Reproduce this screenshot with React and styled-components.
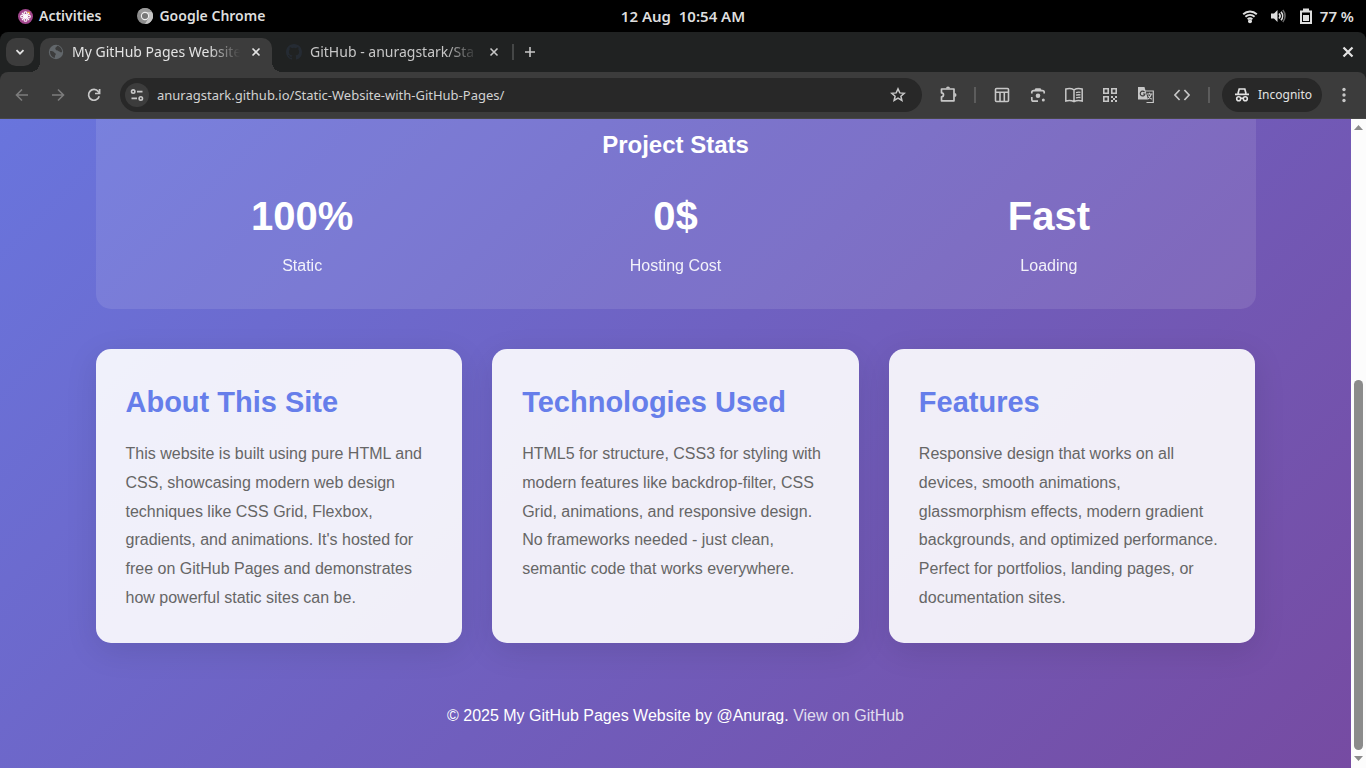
import React from "react";
import styled, { createGlobalStyle } from "styled-components";

const GlobalStyle = createGlobalStyle`
  *, *::before, *::after { box-sizing: border-box; }
  html, body { margin: 0; padding: 0; background: #000; }
  body { font-family: "Liberation Sans", Arial, sans-serif; overflow: hidden; }
  h2, h3, p { margin: 0; }
  button { border: 0; margin: 0; padding: 0; background: none; color: inherit; font: inherit; cursor: pointer; }
  svg { display: block; flex: none; }
`;

const Desktop = styled.div`
  display: flex;
  flex-direction: column;
  height: 100vh;
  background: #000;
`;

/* ---------- system bar ---------- */

const SystemBar = styled.header`
  display: grid;
  grid-template-columns: 1fr auto 1fr;
  align-items: center;
  flex: none;
  height: 32px;
  padding: 0 12px;
  color: #dedede;
  font: 600 14px/20px "Noto Sans", sans-serif;
`;

const SystemGroup = styled.div`
  display: flex;
  align-items: center;
  gap: ${(p) => p.$gap}px;
  padding-left: 6px;
  justify-content: ${(p) => (p.$end ? "flex-end" : "flex-start")};
`;

const SystemButton = styled.button`
  display: flex;
  align-items: center;
  gap: 6px;
  white-space: pre;
  font-size: ${(p) => (p.$large ? 15 : 14)}px;
`;

/* ---------- browser window ---------- */

const Window = styled.div`
  display: flex;
  flex-direction: column;
  flex: 1;
  min-height: 0;
  overflow: hidden;
  border-radius: 8px 8px 0 0;
  background: #202222;
  font-family: "Noto Sans", sans-serif;
`;

const TabStrip = styled.div`
  display: flex;
  align-items: center;
  flex: none;
  height: 40px;
  padding: 0 10px 0 6px;
  color: #e3e3e3;
`;

const TabSearch = styled.button`
  display: grid;
  place-items: center;
  width: 28px;
  height: 28px;
  margin-right: 6px;
  border-radius: 10px;
  background: #3c3c3c;
`;

const Tab = styled.div`
  position: relative;
  display: flex;
  align-items: center;
  align-self: flex-end;
  width: ${(p) => (p.$active ? 232 : 240)}px;
  height: 34px;
  padding: ${(p) => (p.$active ? "0 8px 6px" : "0 10px 6px 14px")};
  border-radius: 10px 10px 0 0;
  background: ${(p) => (p.$active ? "#3c3c3c" : "transparent")};
  color: ${(p) => (p.$active ? "#e3e3e3" : "#c7c7c7")};

  &::before, &::after {
    content: "";
    display: ${(p) => (p.$active ? "block" : "none")};
    position: absolute;
    bottom: 0;
    width: 10px;
    height: 10px;
  }
  &::before { left: -10px; background: radial-gradient(circle at 0 0, transparent 10px, #3c3c3c 10px); }
  &::after { right: -10px; background: radial-gradient(circle at 100% 0, transparent 10px, #3c3c3c 10px); }
`;

const TabTitle = styled.button`
  flex: 1;
  min-width: 0;
  margin: 0 8px;
  overflow: hidden;
  text-align: left;
  white-space: nowrap;
  font-size: 14px;
  line-height: 20px;
  mask-image: linear-gradient(to right, #000 calc(100% - 32px), transparent);
`;

const SmallButton = styled.button`
  display: grid;
  place-items: center;
  flex: none;
  width: 16px;
  height: 16px;
`;

const StripDivider = styled.span`
  width: 2px;
  height: 16px;
  margin-right: 8px;
  background: #454747;
`;

const Spacer = styled.div`
  flex: 1;
`;

const Toolbar = styled.div`
  display: flex;
  align-items: center;
  flex: none;
  height: 47px;
  padding: 0 12px;
  border-bottom: 1px solid #474747;
  border-radius: 8px 8px 0 0;
  background: #3c3c3c;
  color: #c7c7c7;
`;

const NavButtons = styled.nav`
  display: flex;
  gap: 16px;
  margin-right: 16px;
`;

const ToolButton = styled.button`
  display: grid;
  place-items: center;
  width: 20px;
  height: 20px;
  color: ${(p) => (p.$dim ? "#7c7c7c" : "#c7c7c7")};
`;

const AddressBar = styled.form`
  display: flex;
  align-items: center;
  flex: 1;
  height: 34px;
  margin: 0 16px 0 0;
  padding: 0 16px 0 5px;
  border-radius: 17px;
  background: #282828;
`;

const SiteInfo = styled.button`
  display: grid;
  place-items: center;
  width: 24px;
  height: 24px;
  border-radius: 50%;
  background: #3c3c3c;
`;

const AddressInput = styled.input`
  flex: 1;
  min-width: 0;
  margin: 0 8px;
  padding: 0;
  border: 0;
  outline: 0;
  background: none;
  color: #d2d2d2;
  font: 400 13px/20px "Noto Sans", sans-serif;
`;

const Extensions = styled.div`
  display: flex;
  gap: 16px;
`;

const ToolDivider = styled.span`
  width: 2px;
  height: 16px;
  margin: 0 16px;
  background: #5c5c5c;
`;

const Incognito = styled.button`
  display: flex;
  align-items: center;
  gap: 8px;
  height: 34px;
  margin: 0 12px 0 -4px;
  padding: 0 10px 0 12px;
  border-radius: 17px;
  background: #282828;
  color: #e3e3e3;
  font-size: 12px;
  line-height: 18px;
`;

/* ---------- web page ---------- */

const Viewport = styled.div`
  display: flex;
  flex: 1;
  min-height: 0;
`;

const Page = styled.main`
  flex: 1;
  min-width: 0;
  overflow: hidden;
  background: linear-gradient(135deg, #667eea 0%, #764ba2 100%) bottom / 100% 1096px;
  font-family: "Liberation Sans", Arial, sans-serif;
`;

const Container = styled.div`
  max-width: 1200px;
  margin: 0 auto;
  padding: 0 20px;
`;

const Stats = styled.section`
  margin-bottom: 40px;
  padding: 7px 30px 30px;
  border-radius: 0 0 15px 15px;
  background: rgba(255, 255, 255, 0.1);
  color: #fff;
  text-align: center;
`;

const StatsTitle = styled.h3`
  margin-bottom: 20px;
  font-size: 24px;
  line-height: 38px;
`;

const StatsGrid = styled.div`
  display: grid;
  grid-template-columns: repeat(3, 1fr);
  gap: 20px;
`;

const StatValue = styled.div`
  margin-bottom: 5px;
  font-size: 40px;
  font-weight: 700;
  line-height: 64px;
`;

const StatLabel = styled.div`
  font-size: 16px;
  line-height: 26px;
  opacity: 0.9;
`;

const Cards = styled.section`
  display: grid;
  grid-template-columns: repeat(3, 1fr);
  gap: 30px;
`;

const Card = styled.article`
  padding: 30px;
  border-radius: 15px;
  background: rgba(255, 255, 255, 0.9);
  box-shadow: 0 8px 32px rgba(0, 0, 0, 0.1);
`;

const CardTitle = styled.h2`
  margin-bottom: 15px;
  color: #667eea;
  font-size: 29px;
  line-height: 46px;
`;

const CardText = styled.p`
  color: #666;
  font-size: 16px;
  line-height: 1.8;
`;

const Footer = styled.footer`
  padding: 60px 0 39px;
  color: #fff;
  font-size: 16px;
  line-height: 26px;
  text-align: center;
`;

const FooterLink = styled.a`
  color: rgba(255, 255, 255, 0.8);
  text-decoration: none;
`;

const Scrollbar = styled.div`
  display: flex;
  flex-direction: column;
  align-items: center;
  justify-content: space-between;
  flex: none;
  width: 15px;
  padding: 5px 0 6px;
  background: #fcfcfc;
`;

const ScrollTrack = styled.div`
  display: flex;
  flex-direction: column;
  justify-content: flex-end;
  flex: 1;
  padding: 4px 0 6px;
`;

const ScrollThumb = styled.div`
  width: 9px;
  height: 60%;
  border-radius: 5px;
  background: #8b8b8b;
`;

/* ---------- icons ---------- */

const Icon = ({ size = 16, box = 16, children }) => (
  <svg width={size} height={size} viewBox={`0 0 ${box} ${box}`} fill="none" stroke="currentColor" strokeWidth="1.6" aria-hidden="true">
    {children}
  </svg>
);

const ActivitiesIcon = () => (
  <Icon size={15}>
    <circle cx="8" cy="8" r="8" fill="#a3478e" stroke="none" />
    <path d="M9 2.8h3.6v3.6z" fill="#f0a22e" stroke="none" />
    <g stroke="#fff" strokeWidth="1.2">
      <circle cx="8" cy="8" r="1.3" />
      <circle cx="8" cy="4.4" r="1.5" /><circle cx="8" cy="11.6" r="1.5" />
      <circle cx="4.4" cy="8" r="1.5" /><circle cx="11.6" cy="8" r="1.5" />
      <path d="M4.2 4.2l7.6 7.6M11.8 4.2l-7.6 7.6" />
    </g>
  </Icon>
);

const ChromeIcon = () => (
  <Icon>
    <circle cx="8" cy="8" r="8" fill="#8c8c8c" stroke="none" />
    <path d="M8 4h7A8 8 0 0 1 8 16l3.5-6z" fill="#c4c4c4" stroke="none" />
    <path d="M1.1 4A8 8 0 0 1 15 4H8a4 4 0 0 0-3.5 2z" fill="#999" stroke="none" />
    <circle cx="8" cy="8" r="3.6" fill="#777" stroke="#eee" strokeWidth="1.1" />
  </Icon>
);

const WifiIcon = () => (
  <Icon>
    <path d="M1.2 6.2c3.900-3.700 9.700-3.700 13.600 0M3.400 8.800c2.700-2.400 6.500-2.400 9.200 0M5.600 11.200c1.500-1.100 3.300-1.100 4.800 0" strokeWidth="1.900" />
    <circle cx="8" cy="13.300" r="2" fill="currentColor" stroke="none" />
  </Icon>
);

const VolumeIcon = () => (
  <Icon>
    <path d="M1 5.500h3L7.500 2v12L4 10.500H1z" fill="currentColor" stroke="none" />
    <path d="M9 5.500c1.300 1.400 1.300 3.600 0 5M11 3.700c2.100 2.500 2.100 6.100 0 8.600" />
    <path d="M12.800 2c3 3.500 3 8.500 0 12" stroke="#666" />
  </Icon>
);

const BatteryIcon = () => (
  <Icon>
    <path d="M5 1.500h6M3 3.500h10v11.500H3z" strokeWidth="2" />
    <path d="M5 7h6v6H5z" fill="currentColor" stroke="none" />
  </Icon>
);

const ChevronIcon = () => (
  <Icon size={12} box={12}><path d="M2.500 4.200 6 7.700l3.500-3.500" strokeWidth="1.800" /></Icon>
);

const GlobeIcon = () => (
  <Icon>
    <circle cx="8" cy="8" r="7.200" fill="#62676b" stroke="none" />
    <path d="M2 7c2 0 3.200.2 4 1.200.6.900 1.600.8 1.800 1.900.1 1-.8 1.200-.8 2.300L6.600 14C3.600 13 1.800 10.400 2 7zM9 1.800c-.2 1.600-1.600 1.300-1.700 2.600 0 1 .8 1.300 1.500 2 .7.800 2 .3 2.700 1 .6.700 1.500.8 2.600.8.200-3-1.900-5.900-5.100-6.400z" fill="#3c3c3c" stroke="none" />
  </Icon>
);

const GitHubIcon = () => (
  <Icon>
    <path
      fill="#252b33"
      stroke="none"
      d="M8 0C3.580 0 0 3.580 0 8c0 3.540 2.290 6.530 5.470 7.590.4.070.55-.17.55-.38 0-.19-.01-.82-.01-1.490-2.010.37-2.530-.49-2.690-.94-.09-.23-.48-.94-.82-1.130-.28-.15-.68-.52-.01-.53.63-.01 1.080.58 1.230.82.72 1.210 1.870.87 2.330.66.07-.52.28-.87.51-1.070-1.780-.2-3.640-.89-3.640-3.950 0-.87.31-1.590.82-2.150-.08-.2-.36-1.020.08-2.120 0 0 .67-.21 2.200.82a7.600 7.600 0 0 1 4 0c1.530-1.040 2.200-.82 2.200-.82.44 1.100.16 1.920.08 2.120.51.56.82 1.270.82 2.150 0 3.070-1.870 3.750-3.650 3.950.29.25.54.73.54 1.480 0 1.070-.01 1.930-.01 2.200 0 .21.15.46.55.38A8 8 0 0 0 16 8c0-4.420-3.580-8-8-8z"
    />
  </Icon>
);

const CloseIcon = ({ bold }) => (
  <Icon><path d={bold ? "M3.500 3.500l9 9M12.500 3.500l-9 9" : "M4.500 4.500l7 7M11.500 4.500l-7 7"} strokeWidth={bold ? 2.200 : 1.600} /></Icon>
);

const PlusIcon = () => <Icon><path d="M8 3v10M3 8h10" stroke="#c7c7c7" strokeWidth="1.600" /></Icon>;

const BackIcon = () => <Icon><path d="M14 8H3M8 2.500 2.500 8 8 13.500" /></Icon>;
const ForwardIcon = () => <Icon><path d="M2 8h11M8 2.500 13.500 8 8 13.500" /></Icon>;
const ReloadIcon = () => (
  <Icon>
    <path d="M13.200 9.200A5.400 5.400 0 1 1 12.300 4.600L13.500 6" strokeWidth="1.700" />
    <path d="M13.600 2v4.500H9" strokeWidth="1.700" />
  </Icon>
);

const TuneIcon = () => (
  <Icon>
    <circle cx="4.200" cy="4.600" r="1.700" /><circle cx="11.800" cy="11.400" r="1.700" />
    <path d="M8 4.600h5.500M2.500 11.400H8" />
  </Icon>
);

const StarIcon = () => (
  <Icon><path d="M8 1.900l1.800 4 4.400.4-3.300 2.900 1 4.300L8 11.200l-3.900 2.300 1-4.300L1.800 6.300l4.400-.4z" strokeWidth="1.500" /></Icon>
);

const PuzzleIcon = () => (
  <Icon size={20} box={20}>
    <path d="M3.500 4h12.500v11.800h-12.500v-4a2 2 0 0 0 0-4z" strokeWidth="1.700" strokeLinejoin="round" />
    <path d="M8 3.500a2 2 0 0 1 4 0zM16.500 8a2 2 0 0 1 0 4z" fill="currentColor" stroke="none" />
  </Icon>
);

const LayoutIcon = () => (
  <Icon><rect x="1.500" y="1.500" width="13" height="13" rx="1" /><path d="M1.500 5.300h13M6 5.300v9M10.300 5.300v9" /></Icon>
);

const LensIcon = () => (
  <Icon>
    <path d="M1.800 6.500V5.300c0-1 .7-1.700 1.700-1.700h9c1 0 1.700.7 1.700 1.700v1.200M1.800 10v2.500c0 1 .7 1.700 1.700 1.700H8M5 3.500 6 2h4l1 1.500" strokeWidth="1.700" />
    <circle cx="8" cy="8.700" r="2.300" fill="currentColor" stroke="none" />
    <circle cx="13.300" cy="13" r="1.500" fill="currentColor" stroke="none" />
  </Icon>
);

const ReaderIcon = () => (
  <Icon size={20} box={20}>
    <path d="M10 4.800C7.500 3.200 4.500 3.200 1.800 4v12c2.700-.8 5.700-.8 8.200.7 2.500-1.500 5.500-1.500 8.200-.7V4c-2.700-.8-5.700-.8-8.200.8zM10 4.800v11.800" strokeWidth="1.500" />
    <path d="M12 7.600c1.500-.5 3-.6 4.500-.3M12 10.200c1.500-.5 3-.6 4.500-.3M12 12.800c1.500-.5 3-.6 4.500-.3" strokeWidth="1.300" />
  </Icon>
);

const QrIcon = () => (
  <Icon>
    <path d="M1.800 1.800h4.400v4.400H1.800zM9.800 1.800h4.400v4.400H9.800zM1.800 9.800h4.400v4.400H1.800z" />
    <path d="M9 9h2v2H9zM13 9h2v2h-2zM11 11h2v2h-2zM9 13h2v2H9zM13 13h2v2h-2z" fill="currentColor" stroke="none" />
  </Icon>
);

const TranslateIcon = () => (
  <Icon>
    <path d="M6.500 4H15.300v11.500H8.500" strokeWidth="1.200" />
    <path d="M0 0h6.500L10 12.500H0z" fill="currentColor" stroke="none" />
    <path d="M6.500 5A2.400 2.400 0 1 0 7 7H5" stroke="#3c3c3c" strokeWidth="1.200" />
    <path d="M9 7h5.500M11.500 5.700V7M13.300 7c-.6 2.300-1.700 3.800-3.300 5M10.300 8.500c.7 1.500 1.900 2.700 3.400 3.700" strokeWidth="1.100" />
  </Icon>
);

const CodeIcon = () => <Icon><path d="M5.600 3 .9 8l4.700 5M10.400 3l4.700 5-4.700 5" strokeWidth="1.700" /></Icon>;

const IncognitoIcon = () => (
  <Icon>
    <path d="M4 6.500 5.200 2h5.600L12 6.500M1 7.300h14" strokeWidth="1.700" />
    <circle cx="4.700" cy="11.700" r="2" /><circle cx="11.300" cy="11.700" r="2" />
    <path d="M6.800 11.300h2.400" />
  </Icon>
);

const MenuIcon = () => (
  <Icon>
    <g fill="currentColor" stroke="none"><circle cx="8" cy="2.500" r="1.700" /><circle cx="8" cy="8" r="1.700" /><circle cx="8" cy="13.500" r="1.700" /></g>
  </Icon>
);

const ScrollArrow = ({ down }) => (
  <svg width="9" height="6" viewBox="0 0 9 6" aria-hidden="true">
    <path d={down ? "M0 0h9L4.500 5z" : "M0 6h9L4.500 1z"} fill="#8b8b8b" />
  </svg>
);

/* ---------- data ---------- */

const stats = [
  { value: "100%", label: "Static" },
  { value: "0$", label: "Hosting Cost" },
  { value: "Fast", label: "Loading" },
];

const cards = [
  {
    title: "About This Site",
    text: "This website is built using pure HTML and CSS, showcasing modern web design techniques like CSS Grid, Flexbox, gradients, and animations. It's hosted for free on GitHub Pages and demonstrates how powerful static sites can be.",
  },
  {
    title: "Technologies Used",
    text: "HTML5 for structure, CSS3 for styling with modern features like backdrop-filter, CSS Grid, animations, and responsive design. No frameworks needed - just clean, semantic code that works everywhere.",
  },
  {
    title: "Features",
    text: "Responsive design that works on all devices, smooth animations, glassmorphism effects, modern gradient backgrounds, and optimized performance. Perfect for portfolios, landing pages, or documentation sites.",
  },
];

const extensions = [
  ["Page layout", LayoutIcon],
  ["Search with Lens", LensIcon],
  ["Reading mode", ReaderIcon],
  ["Create QR code", QrIcon],
  ["Translate", TranslateIcon],
  ["Developer tools", CodeIcon],
];

export default function App() {
  return (
    <Desktop>
      <GlobalStyle />
      <SystemBar>
        <SystemGroup $gap={36}>
          <SystemButton><ActivitiesIcon />Activities</SystemButton>
          <SystemButton><ChromeIcon />Google Chrome</SystemButton>
        </SystemGroup>
        <SystemButton $large>{"12 Aug  10:54 AM"}</SystemButton>
        <SystemGroup $gap={12} $end>
          <WifiIcon />
          <VolumeIcon />
          <SystemButton $large><BatteryIcon />77 %</SystemButton>
        </SystemGroup>
      </SystemBar>

      <Window>
        <TabStrip>
          <TabSearch aria-label="Search tabs"><ChevronIcon /></TabSearch>
          <Tab $active>
            <GlobeIcon />
            <TabTitle>My GitHub Pages Website</TabTitle>
            <SmallButton aria-label="Close tab"><CloseIcon /></SmallButton>
          </Tab>
          <Tab>
            <GitHubIcon />
            <TabTitle>GitHub - anuragstark/Sta</TabTitle>
            <SmallButton aria-label="Close tab"><CloseIcon /></SmallButton>
          </Tab>
          <StripDivider />
          <SmallButton aria-label="New tab"><PlusIcon /></SmallButton>
          <Spacer />
          <SmallButton aria-label="Close window"><CloseIcon bold /></SmallButton>
        </TabStrip>

        <Toolbar>
          <NavButtons aria-label="History">
            <ToolButton $dim aria-label="Back"><BackIcon /></ToolButton>
            <ToolButton $dim aria-label="Forward"><ForwardIcon /></ToolButton>
            <ToolButton aria-label="Reload"><ReloadIcon /></ToolButton>
          </NavButtons>
          <AddressBar onSubmit={(e) => e.preventDefault()}>
            <SiteInfo type="button" aria-label="View site information"><TuneIcon /></SiteInfo>
            <AddressInput aria-label="Address" defaultValue="anuragstark.github.io/Static-Website-with-GitHub-Pages/" spellCheck={false} />
            <SmallButton type="button" aria-label="Bookmark this page"><StarIcon /></SmallButton>
          </AddressBar>
          <ToolButton aria-label="Extensions"><PuzzleIcon /></ToolButton>
          <ToolDivider />
          <Extensions>
            {extensions.map(([label, Glyph]) => (
              <ToolButton key={label} aria-label={label}><Glyph /></ToolButton>
            ))}
          </Extensions>
          <ToolDivider />
          <Incognito><IncognitoIcon />Incognito</Incognito>
          <ToolButton aria-label="Menu"><MenuIcon /></ToolButton>
        </Toolbar>

        <Viewport>
          <Page>
            <Container>
              <Stats>
                <StatsTitle>Project Stats</StatsTitle>
                <StatsGrid>
                  {stats.map((s) => (
                    <div key={s.label}>
                      <StatValue>{s.value}</StatValue>
                      <StatLabel>{s.label}</StatLabel>
                    </div>
                  ))}
                </StatsGrid>
              </Stats>
              <Cards>
                {cards.map((c) => (
                  <Card key={c.title}>
                    <CardTitle>{c.title}</CardTitle>
                    <CardText>{c.text}</CardText>
                  </Card>
                ))}
              </Cards>
              <Footer>
                © 2025 My GitHub Pages Website by @Anurag. <FooterLink href="#github">View on GitHub</FooterLink>
              </Footer>
            </Container>
          </Page>
          <Scrollbar>
            <ScrollArrow />
            <ScrollTrack><ScrollThumb /></ScrollTrack>
            <ScrollArrow down />
          </Scrollbar>
        </Viewport>
      </Window>
    </Desktop>
  );
}
